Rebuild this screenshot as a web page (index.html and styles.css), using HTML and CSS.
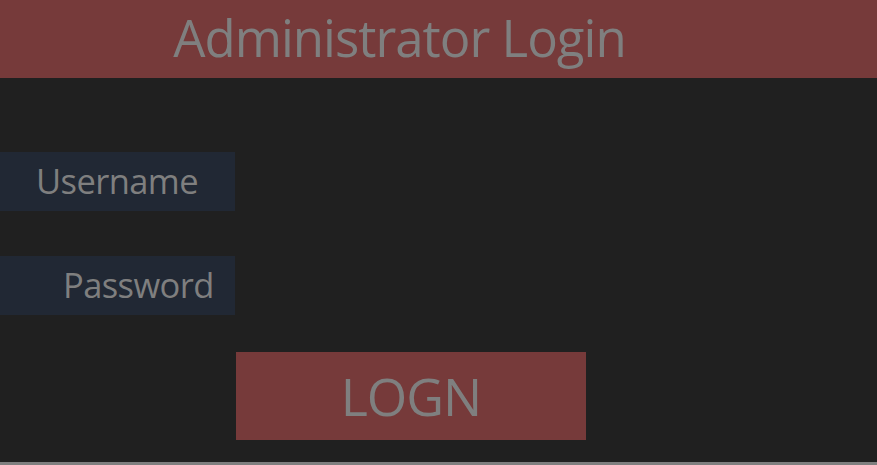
FILE: index.html
```html
<!DOCTYPE html>
<html>
<head>
<meta charset="utf-8">
<link rel="stylesheet" href="styles.css">
</head>
<body>
<header class="header"><h1 class="title">Administrator Login</h1></header>
<main class="form">
  <div class="field"><label class="label label-user">Username</label></div>
  <div class="field field-pass"><label class="label label-pass">Password</label></div>
  <button class="login">LOGN</button>
</main>
<div class="footer-line"></div>
</body>
</html>
```
FILE: styles.css
```css
html, body {
  margin: 0;
  padding: 0;
  background: #202020;
  height: 100%;
  overflow: hidden;
}
body {
  font-family: "Open Sans", "Noto Sans", sans-serif;
  color: #7f7f7f;
  display: flex;
  flex-direction: column;
}
.header {
  height: 78px;
  background: #763a3a;
  display: flex;
  justify-content: center;
  align-items: center;
  padding-right: 78px;
}
.title {
  margin: 0 0 3px;
  font-weight: 400;
  font-size: 51px;
  letter-spacing: -1px;
  line-height: 1;
  color: #7f7f7f;
}
.form {
  display: flex;
  flex-direction: column;
  margin-top: 74px;
  flex: 1;
}
.field {
  width: 235px;
  height: 59px;
  background: #212834;
  display: flex;
  align-items: center;
}
.field-pass {
  margin-top: 45px;
}
.label {
  font-size: 34.5px;
  letter-spacing: -0.6px;
  line-height: 1;
  color: #7f7f7f;
}
.label-user { padding-left: 36px; }
.label-pass { padding-left: 63px; }
.login {
  margin-top: 37px;
  margin-left: 236px;
  width: 350px;
  height: 88px;
  border: 0;
  padding: 0;
  background: #763a3a;
  color: #7f7f7f;
  font-family: "Open Sans", "Noto Sans", sans-serif;
  font-size: 52px;
  line-height: 1;
  letter-spacing: -1px;
}
.footer-line {
  height: 3px;
  background: #7f7f7f;
  margin-top: auto;
}
```
